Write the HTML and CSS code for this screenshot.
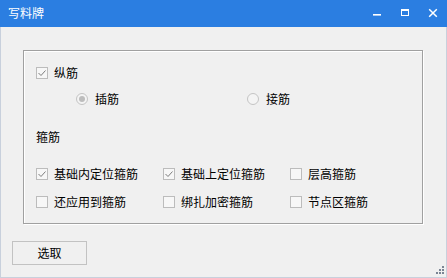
FILE: index.html
```html
<!DOCTYPE html>
<html lang="zh-CN">
<head>
<meta charset="utf-8">
<title>写料牌</title>
<link rel="stylesheet" href="styles.css">
</head>
<body>
<div class="window">
  <div class="titlebar">
    <span class="title">写料牌</span>
    <div class="controls">
      <span class="ctl"><svg width="10" height="10" viewBox="0 0 10 10"><rect x="1" y="6" width="8" height="1.6" fill="#fff"/></svg></span>
      <span class="ctl"><svg width="10" height="10" viewBox="0 0 10 10"><rect x="1.5" y="1.5" width="7" height="6" fill="none" stroke="#fff" stroke-width="1"/><rect x="1" y="1" width="8" height="2" fill="#fff"/></svg></span>
      <span class="ctl"><svg width="10" height="10" viewBox="0 0 10 10"><path d="M1.2 1.2 L8.8 8.8 M8.8 1.2 L1.2 8.8" stroke="#fff" stroke-width="1.5"/></svg></span>
    </div>
  </div>
  <div class="body">
    <div class="group">
      <div class="row r1">
        <label class="cb"><span class="box"><svg width="10" height="10" viewBox="0 0 10 10"><path d="M1.5 5 L4 7.5 L8.5 2.5" fill="none" stroke="#7d7d7d" stroke-width="1"/></svg></span>纵筋</label>
      </div>
      <div class="row r2">
        <label class="rb rb1"><span class="radio on"></span>插筋</label>
        <label class="rb rb2"><span class="radio"></span>接筋</label>
      </div>
      <div class="row r3">箍筋</div>
      <div class="grid">
        <label class="cb"><span class="box"><svg width="10" height="10" viewBox="0 0 10 10"><path d="M1.5 5 L4 7.5 L8.5 2.5" fill="none" stroke="#7d7d7d" stroke-width="1"/></svg></span>基础内定位箍筋</label>
        <label class="cb"><span class="box"><svg width="10" height="10" viewBox="0 0 10 10"><path d="M1.5 5 L4 7.5 L8.5 2.5" fill="none" stroke="#7d7d7d" stroke-width="1"/></svg></span>基础上定位箍筋</label>
        <label class="cb"><span class="box"></span>层高箍筋</label>
        <label class="cb"><span class="box"></span>还应用到箍筋</label>
        <label class="cb"><span class="box"></span>绑扎加密箍筋</label>
        <label class="cb"><span class="box"></span>节点区箍筋</label>
      </div>
    </div>
    <button class="btn">选取</button>
    <svg class="grip" width="8" height="8" viewBox="0 0 8 8"><g fill="#7b8594"><rect x="6" y="0" width="2" height="2"/><rect x="3" y="3" width="2" height="2"/><rect x="6" y="3" width="2" height="2"/><rect x="0" y="6" width="2" height="2"/><rect x="3" y="6" width="2" height="2"/><rect x="6" y="6" width="2" height="2"/></g></svg>
  </div>
</div>
</body>
</html>
```

FILE: styles.css
```css
* { box-sizing: border-box; }
html, body { margin: 0; padding: 0; }
body {
  font-family: "Noto Sans CJK SC", "Microsoft YaHei", sans-serif;
  font-size: 12px;
  color: #000;
  background: #f0f0f0;
}
.window {
  width: 447px;
  height: 278px;
  display: flex;
  flex-direction: column;
}
.titlebar {
  height: 27px;
  background: #2b7ee1;
  display: flex;
  align-items: center;
  flex: none;
}
.title {
  color: #fff;
  padding-left: 8px;
  line-height: 14px;
  margin-top: -1px;
}
.controls {
  margin-left: auto;
  display: flex;
  align-self: flex-start;
}
.ctl {
  width: 28px;
  height: 27px;
  padding-top: 8px;
  display: flex;
  justify-content: center;
}
.body {
  flex: 1;
  position: relative;
  background: #f0f0f0;
  border: 1px solid #c8d0dc;
  border-top: none;
  padding-top: 23px;
}
.group {
  margin-left: 22px;
  width: 400px;
  height: 174px;
  border: 1px solid #a0a0a0;
  box-shadow: inset 1px 1px 0 #fff, 1px 1px 0 #fff;
  padding: 17px 0 0 12px;
}
.row {
  height: 12px;
  display: flex;
  align-items: center;
  line-height: 12px;
}
.r1 { margin-top: -1px; }
.r2 { margin-top: 14px; }
.r3 { margin-top: 26px; }
.cb, .rb {
  display: flex;
  align-items: center;
  height: 12px;
  line-height: 12px;
  white-space: nowrap;
}
.box {
  width: 12px;
  height: 12px;
  border: 1px solid #bcbcbc;
  background: #f7f7f7;
  margin-right: 6px;
  flex: none;
  display: flex;
  align-items: center;
  justify-content: center;
}
.rb1 { margin-left: 40px; }
.rb2 { margin-left: 128px; }
.radio {
  width: 12px;
  height: 12px;
  border: 1px solid #c4c4c4;
  border-radius: 50%;
  background: #f4f4f4;
  margin-right: 7px;
  flex: none;
  display: flex;
  align-items: center;
  justify-content: center;
}
.radio.on::after {
  content: "";
  width: 6px;
  height: 6px;
  border-radius: 50%;
  background: #bdbdbd;
}
.grid {
  margin-top: 25px;
  display: grid;
  grid-template-columns: 127px 127px 100px;
  grid-auto-rows: 12px;
  row-gap: 16px;
}
.btn {
  display: block;
  margin: 17px 0 0 11px;
  width: 75px;
  height: 24px;
  border: 1px solid #c2c2c2;
  background: #f0f0f0;
  font-family: inherit;
  font-size: 12px;
  color: #000;
  padding: 0;
  line-height: 22px;
}
.grip {
  position: absolute;
  right: 2px;
  bottom: 3px;
}
```
